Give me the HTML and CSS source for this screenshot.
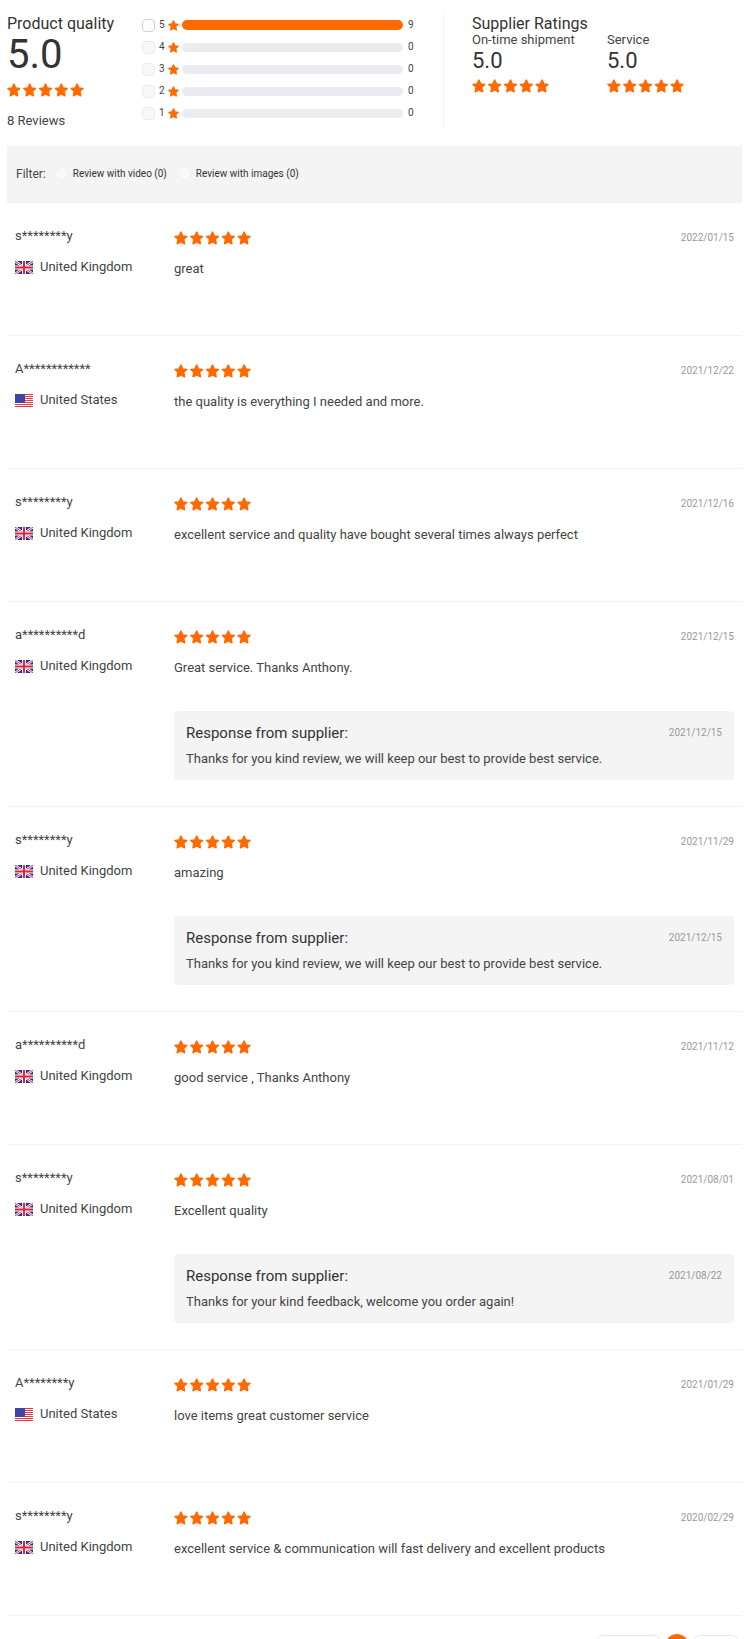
FILE: index.html
```html
<!DOCTYPE html>
<html lang="en">
<head>
<meta charset="utf-8">
<meta name="viewport" content="width=device-width, initial-scale=1">
<title>Product reviews</title>
<link rel="stylesheet" href="styles.css">
</head>
<body>
<svg class="defs" aria-hidden="true">
  <symbol id="star" viewBox="0 0 14 14"><path d="M7 1 8.800 4.900 13 5.400 9.900 8.300 10.700 12.800 7 10.800 3.300 12.800 4.100 8.300 1 5.400 5.200 4.900Z" fill="#ff6a00" stroke="#ff6a00" stroke-width="1.500" stroke-linejoin="round"/></symbol>
  <symbol id="stars" viewBox="0 0 78 14">
    <use href="#star" x="0" width="14" height="14"/><use href="#star" x="16" width="14" height="14"/><use href="#star" x="32" width="14" height="14"/><use href="#star" x="48" width="14" height="14"/><use href="#star" x="64" width="14" height="14"/>
  </symbol>
  <symbol id="uk" viewBox="0 0 18 13">
    <path fill="#26358c" d="M0 0h18v13H0z"/>
    <path d="M0 0 18 13M18 0 0 13" stroke="#fff" stroke-width="2.400"/>
    <path d="M0 0 18 13M18 0 0 13" stroke="#d8304a" stroke-width="1"/>
    <path d="M9 0v13M0 6.500h18" stroke="#fff" stroke-width="3.800"/>
    <path d="M9 0v13M0 6.500h18" stroke="#d8203a" stroke-width="1.900"/>
  </symbol>
  <symbol id="us" viewBox="0 0 18 13">
    <path fill="#fff" d="M0 0h18v13H0z"/>
    <path d="M0 .5h18M0 2.500h18M0 4.500h18M0 6.500h18M0 8.500h18M0 10.500h18M0 12.500h18" stroke="#f5303c" stroke-width="1.200"/>
    <path fill="#3c45a5" d="M0 0h10v9H0z"/>
  </symbol>
</svg>
<main class="page">
  <section class="summary">
    <div class="quality">
      <h2 class="heading">Product quality</h2>
      <p class="score">5.0</p>
      <svg class="stars"><use href="#stars"/></svg>
      <p class="total">8 Reviews</p>
    </div>
    <div class="bars">
      <label class="bar-row"><input class="check" type="checkbox"><span class="level">5</span><svg class="mini"><use href="#star"/></svg><span class="track full"></span><span class="count">9</span></label>
      <label class="bar-row"><input class="check" type="checkbox" disabled><span class="level">4</span><svg class="mini"><use href="#star"/></svg><span class="track"></span><span class="count">0</span></label>
      <label class="bar-row"><input class="check" type="checkbox" disabled><span class="level">3</span><svg class="mini"><use href="#star"/></svg><span class="track"></span><span class="count">0</span></label>
      <label class="bar-row"><input class="check" type="checkbox" disabled><span class="level">2</span><svg class="mini"><use href="#star"/></svg><span class="track"></span><span class="count">0</span></label>
      <label class="bar-row"><input class="check" type="checkbox" disabled><span class="level">1</span><svg class="mini"><use href="#star"/></svg><span class="track"></span><span class="count">0</span></label>
    </div>
    <div class="supplier">
      <h2 class="heading">Supplier Ratings</h2>
      <div class="ratings">
        <div><p class="rating-name">On-time shipment</p><p class="rating-score">5.0</p><svg class="stars"><use href="#stars"/></svg></div>
        <div><p class="rating-name">Service</p><p class="rating-score">5.0</p><svg class="stars"><use href="#stars"/></svg></div>
      </div>
    </div>
  </section>

  <form class="filter">
    <span class="filter-title">Filter:</span>
    <label class="option"><input class="check round" type="checkbox" disabled>Review with video (0)</label>
    <label class="option"><input class="check round" type="checkbox" disabled>Review with images (0)</label>
  </form>

  <article class="review">
    <div class="author"><p class="name">s********y</p><p class="country"><svg class="flag"><use href="#uk"/></svg>United Kingdom</p></div>
    <div class="body"><div class="top"><svg class="stars"><use href="#stars"/></svg><time class="date">2022/01/15</time></div><p class="comment">great</p></div>
  </article>
  <article class="review">
    <div class="author"><p class="name">A************</p><p class="country"><svg class="flag"><use href="#us"/></svg>United States</p></div>
    <div class="body"><div class="top"><svg class="stars"><use href="#stars"/></svg><time class="date">2021/12/22</time></div><p class="comment">the quality is everything I needed and more.</p></div>
  </article>
  <article class="review">
    <div class="author"><p class="name">s********y</p><p class="country"><svg class="flag"><use href="#uk"/></svg>United Kingdom</p></div>
    <div class="body"><div class="top"><svg class="stars"><use href="#stars"/></svg><time class="date">2021/12/16</time></div><p class="comment">excellent service and quality have bought several times always perfect</p></div>
  </article>
  <article class="review">
    <div class="author"><p class="name">a**********d</p><p class="country"><svg class="flag"><use href="#uk"/></svg>United Kingdom</p></div>
    <div class="body"><div class="top"><svg class="stars"><use href="#stars"/></svg><time class="date">2021/12/15</time></div><p class="comment">Great service. Thanks Anthony.</p>
      <div class="response"><div class="response-top"><h3 class="response-title">Response from supplier:</h3><time class="date">2021/12/15</time></div><p class="reply">Thanks for you kind review, we will keep our best to provide best service.</p></div></div>
  </article>
  <article class="review">
    <div class="author"><p class="name">s********y</p><p class="country"><svg class="flag"><use href="#uk"/></svg>United Kingdom</p></div>
    <div class="body"><div class="top"><svg class="stars"><use href="#stars"/></svg><time class="date">2021/11/29</time></div><p class="comment">amazing</p>
      <div class="response"><div class="response-top"><h3 class="response-title">Response from supplier:</h3><time class="date">2021/12/15</time></div><p class="reply">Thanks for you kind review, we will keep our best to provide best service.</p></div></div>
  </article>
  <article class="review">
    <div class="author"><p class="name">a**********d</p><p class="country"><svg class="flag"><use href="#uk"/></svg>United Kingdom</p></div>
    <div class="body"><div class="top"><svg class="stars"><use href="#stars"/></svg><time class="date">2021/11/12</time></div><p class="comment">good service , Thanks Anthony</p></div>
  </article>
  <article class="review">
    <div class="author"><p class="name">s********y</p><p class="country"><svg class="flag"><use href="#uk"/></svg>United Kingdom</p></div>
    <div class="body"><div class="top"><svg class="stars"><use href="#stars"/></svg><time class="date">2021/08/01</time></div><p class="comment">Excellent quality</p>
      <div class="response"><div class="response-top"><h3 class="response-title">Response from supplier:</h3><time class="date">2021/08/22</time></div><p class="reply">Thanks for your kind feedback, welcome you order again!</p></div></div>
  </article>
  <article class="review">
    <div class="author"><p class="name">A********y</p><p class="country"><svg class="flag"><use href="#us"/></svg>United States</p></div>
    <div class="body"><div class="top"><svg class="stars"><use href="#stars"/></svg><time class="date">2021/01/29</time></div><p class="comment">love items great customer service</p></div>
  </article>
  <article class="review">
    <div class="author"><p class="name">s********y</p><p class="country"><svg class="flag"><use href="#uk"/></svg>United Kingdom</p></div>
    <div class="body"><div class="top"><svg class="stars"><use href="#stars"/></svg><time class="date">2020/02/29</time></div><p class="comment">excellent service &amp; communication will fast delivery and excellent products</p></div>
  </article>

  <nav class="pager">
    <button class="page-btn prev" type="button"></button>
    <button class="page-btn current" type="button"></button>
    <button class="page-btn next" type="button"></button>
  </nav>
</main>
</body>
</html>
```
FILE: styles.css
```css
* { box-sizing: border-box; margin: 0; }
body { background: #fff; color: #444; font-family: Roboto, "Liberation Sans", sans-serif; font-size: 13px; line-height: 16px; }
.defs { position: absolute; width: 0; height: 0; }
.page { padding: 0 8px 0 7px; }
.stars { display: block; width: 77px; height: 14px; }
.heading { color: #333; font-size: 16px; font-weight: 400; line-height: 20px; }

.summary { display: grid; grid-template-columns: 135fr 302fr 298fr; padding: 14px 0 17px; }
.score { color: #333; font-size: 40px; line-height: 42px; margin-bottom: 7px; }
.total { margin-top: 16px; }
.bars { border-right: 1px solid #f2f2f4; padding-right: 28px; }
.bar-row { display: flex; align-items: center; height: 22px; font-size: 10px; }
.level { width: 13px; padding-left: 4px; }
.mini { width: 11px; height: 11px; margin-right: 3px; }
.track { flex: 1; height: 9px; border-radius: 5px; background: #ebecf0; }
.full { height: 10px; background: #ff6a00; }
.count { width: 12px; padding-left: 5px; }
.check { appearance: none; width: 13px; height: 13px; border: 1px solid #ccd0d6; border-radius: 4px; background: #fff; }
.check:disabled { border-color: #e9ebee; background: #f7f8fa; }
.check.round:disabled { border-color: #eff1f1; border-radius: 6px; background: #f8f9f9; }
.supplier { padding-left: 28px; }
.ratings { display: grid; grid-template-columns: 1fr 1fr; margin-top: -2px; }
.rating-score { color: #333; font-size: 22px; line-height: 26px; margin-bottom: 5px; }

.filter { display: flex; align-items: center; height: 57px; padding: 0 9px 2px; background: #f4f4f4; }
.filter-title { font-size: 12px; margin-right: 9px; }
.option { display: flex; align-items: center; gap: 5px; margin-right: 11px; color: #333; font-size: 10px; }

.review { display: flex; min-height: 133px; padding: 25px 8px 26px; border-bottom: 1px solid #f2f2f2; }
.author { width: 159px; flex: none; }
.name { margin-bottom: 15px; }
.country { display: flex; align-items: center; gap: 7px; }
.flag { width: 18px; height: 13px; }
.body { flex: 1; }
.top { display: flex; align-items: center; justify-content: space-between; height: 18px; padding-top: 2px; }
.date { color: #999; font-size: 10px; }
.comment { margin-top: 15px; }
.response { margin-top: 35px; padding: 12px 12px 13px; border-radius: 4px; background: #f4f4f4; }
.response-top { display: flex; align-items: center; justify-content: space-between; }
.response-title { color: #333; font-size: 15px; font-weight: 400; line-height: 20px; }
.reply { margin-top: 8px; }

.pager { display: flex; justify-content: flex-end; gap: 4px; height: 23px; padding: 18px 3px 0 0; overflow: hidden; }
.page-btn { height: 24px; margin-top: 1px; flex: none; border: 1px solid #e6e7ea; border-radius: 7px; background: #fff; }
.prev { width: 65px; }
.current { width: 24px; margin-top: 0; border: 0; border-radius: 50%; background: #ff6a00; }
.next { width: 46px; }
```
